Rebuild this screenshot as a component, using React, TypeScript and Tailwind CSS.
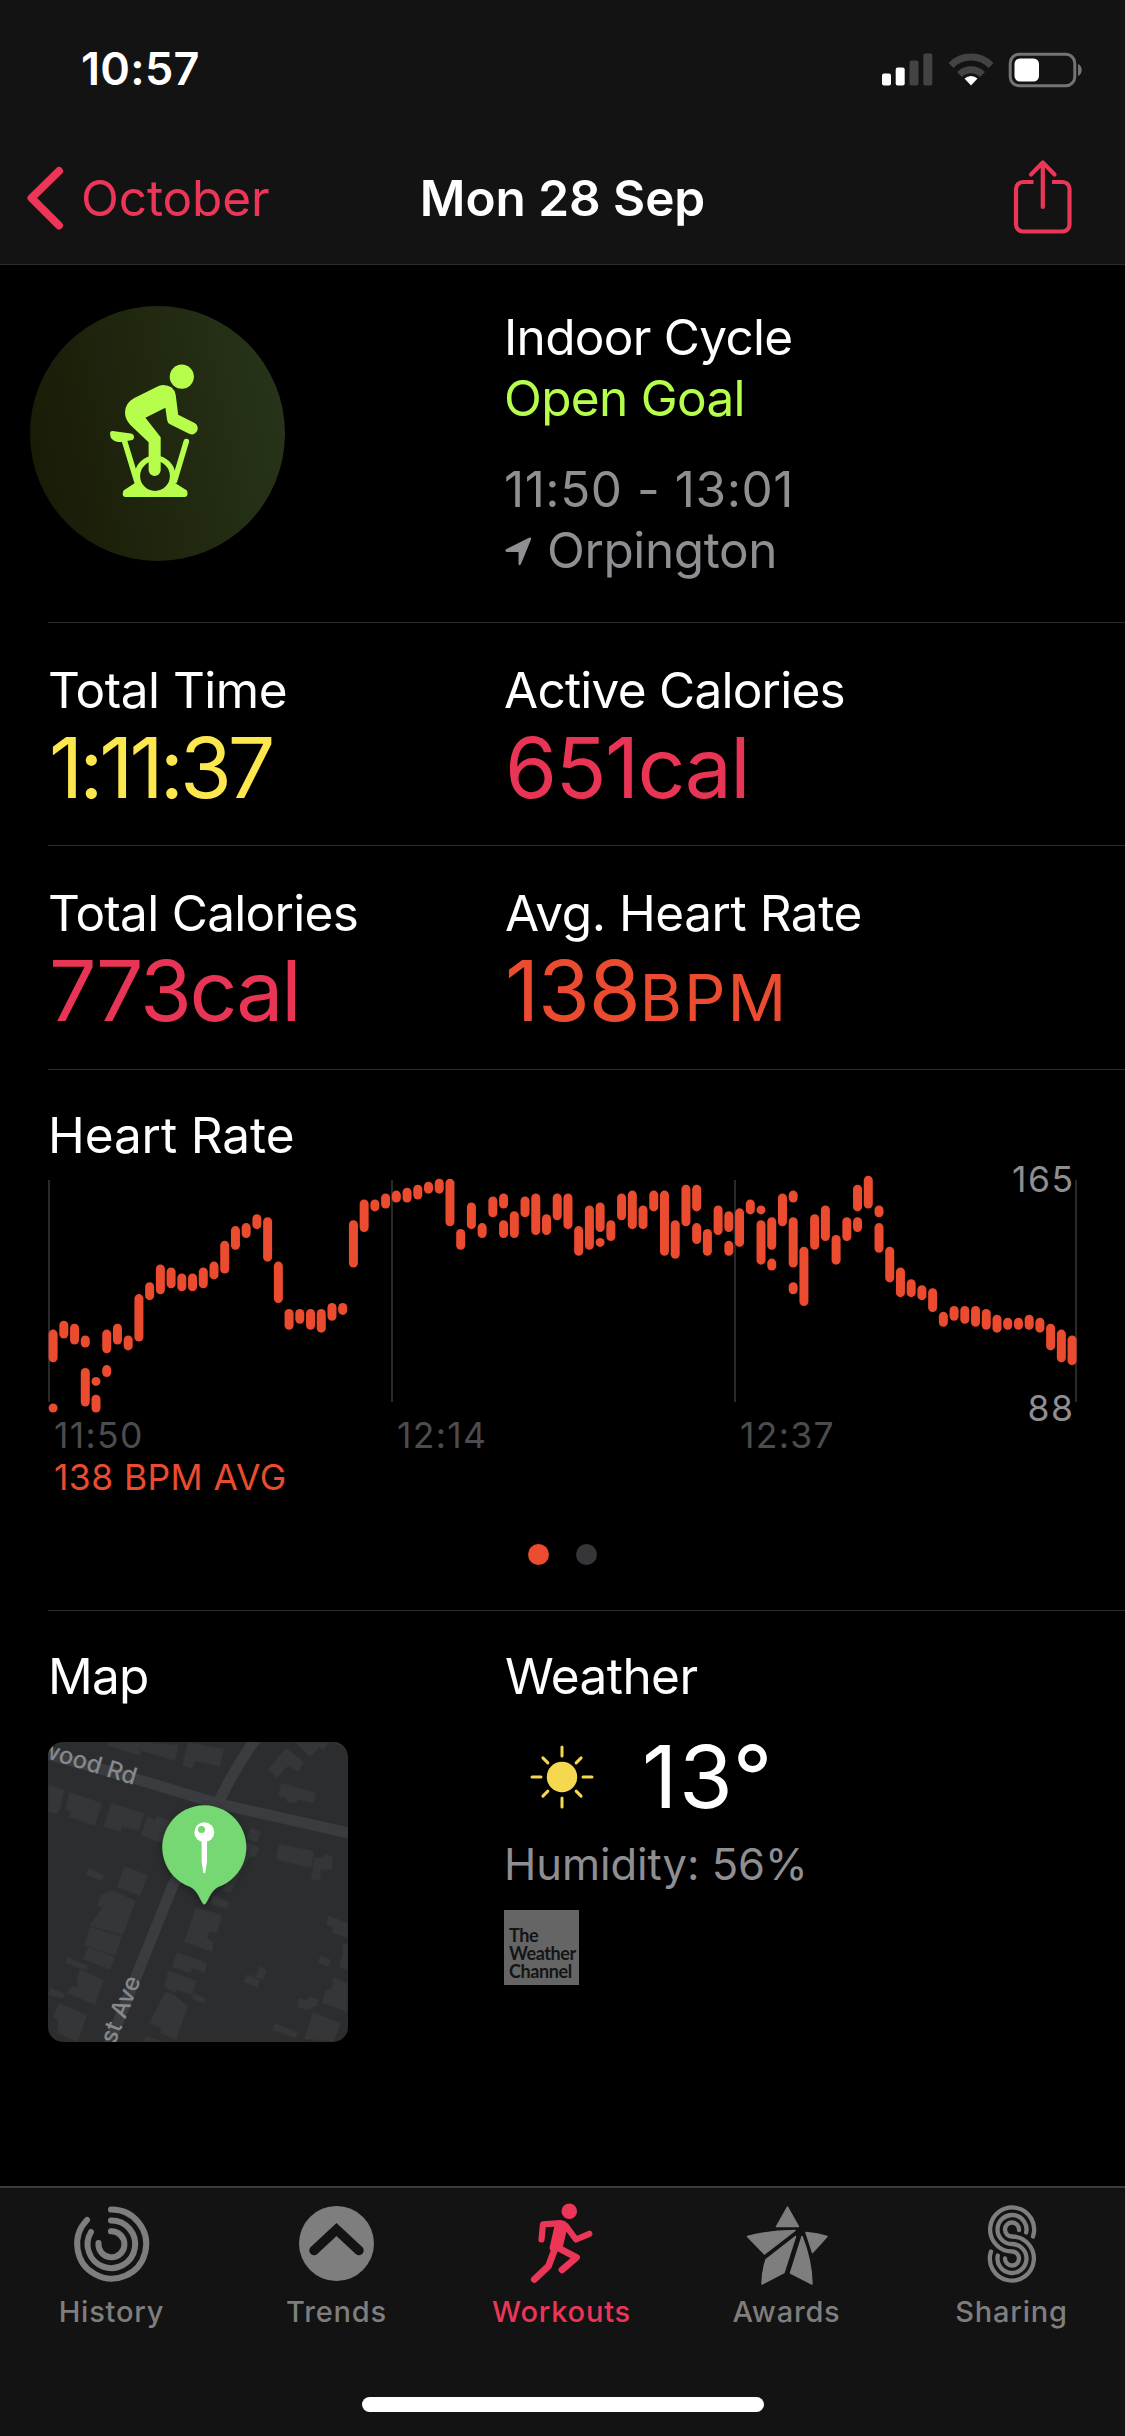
import type { ReactNode } from 'react';

type Range = [low: number, high: number];

// One column per time slot, each with one or more [low, high] BPM ranges
const heartRate: Range[][] = [
  [[105, 113], [88, 88]], [[113, 116]], [[111, 115]], [[110, 111], [90, 100]], [[97, 97], [88, 91]],
  [[108, 113], [100, 101]], [[111, 115]], [[109, 111]], [[112, 125]], [[126, 129]],
  [[128, 135]], [[130, 134]], [[129, 132]], [[129, 132]], [[130, 134]], [[133, 136]],
  [[135, 143]], [[143, 148]], [[147, 149]], [[150, 152]], [[139, 151]], [[125, 136]],
  [[116, 120]], [[118, 120]], [[116, 120]], [[115, 120]], [[119, 122]], [[121, 122]],
  [[137, 150]], [[149, 157]], [[156, 157]], [[157, 159]], [[159, 160]], [[159, 161]],
  [[160, 162]], [[162, 163]], [[162, 164]], [[151, 164]], [[143, 147]], [[150, 156]],
  [[147, 149]], [[154, 158]], [[157, 159], [147, 150]], [[147, 153]], [[154, 158]],
  [[148, 159]], [[148, 152]], [[153, 159]], [[150, 159]], [[141, 148]], [[143, 155]],
  [[149, 156], [144, 144]], [[146, 150]], [[153, 159]], [[150, 160]], [[150, 155]],
  [[156, 160]], [[141, 160]], [[140, 150]], [[151, 162]], [[156, 162], [145, 149]],
  [[141, 147]], [[148, 155]], [[149, 153], [141, 143]], [[144, 154]], [[155, 157]],
  [[155, 155], [138, 150]], [[143, 151], [136, 137]], [[151, 159]],
  [[159, 160], [137, 151], [128, 129]], [[124, 141]], [[143, 152]], [[146, 155]],
  [[138, 145]], [[146, 151]], [[156, 162], [149, 151]], [[157, 165]], [[154, 155], [142, 149]],
  [[132, 141]], [[127, 134]], [[127, 130]], [[126, 128]], [[122, 127]], [[117, 119]],
  [[119, 121]], [[118, 121]], [[117, 121]], [[116, 120]], [[115, 118]], [[116, 117]],
  [[116, 117]], [[116, 118]], [[115, 117]], [[109, 115]], [[105, 113]], [[104, 111]],
];

const buildings = [
  '58,0 97,0 92,14 60,4',
  '97,0 131,3 127,19 90,8',
  '140,0 176,7 172,25 148,19 144,27 134,24',
  '238,6 256,20 250,30 240,24 229,36 220,27',
  '247,0 282,0 275,8 272,5 262,15',
  '286,0 300,0 300,9',
  '233,41 268,51 266,61 250,58 249,61 239,60 238,56 230,54',
  '0,42 17,48 12,67 9,72 0,70',
  '21,50 54,61 47,84 21,75 23,70 18,67',
  '63,61 96,71 91,89 74,85 73,90 56,85',
  '99,74 107,78 109,74 122,78 122,98 109,100 93,93',
  '203,85 213,90 209,101 199,97',
  '199,100 212,106 207,115 202,115 182,151 174,148',
  '231,102 266,109 264,126 228,118',
  '267,115 275,116 277,112 285,115 284,128 273,128 272,139 263,137 265,125',
  '41,126 56,133 54,139 38,133',
  '76,124 100,133 92,154 69,145',
  '60,150 64,148 88,159 75,193 41,184 55,165 49,165 53,153',
  '42,185 74,194 67,214 36,203',
  '40,205 67,215 62,228 35,217',
  '20,215 40,224 39,229 17,221',
  '32,227 56,238 47,263 19,251 24,244 30,245 29,236',
  '2,245 17,252 15,257 0,253',
  '11,261 39,273 30,300 9,291 10,278 5,275',
  '148,165 174,173 169,191 162,190 159,196 166,201 164,210 136,200',
  '165,153 182,160 179,167 162,162',
  '129,210 159,221 157,231 144,226 142,231 124,225',
  '120,228 149,239 144,253 129,248 127,251 116,245',
  '145,251 158,256 156,261 144,257',
  '117,250 126,252 140,265 128,298 112,291 113,286 101,281',
  '97,294 117,300 96,300',
  '280,173 300,181 300,196 284,191 285,185 278,183',
  '273,213 283,218 280,225 269,221',
  '294,201 300,203 300,228 291,225 295,210',
  '212,224 219,228 215,238 207,235',
  '199,232 212,238 210,246 195,240',
  '285,235 300,241 299,270 274,261 277,248 284,246',
  '251,256 259,258 261,254 271,258 269,264 259,268 249,265',
  '265,270 293,281 286,300 256,297',
  '227,281 250,290 247,296 224,288',
];

const bpmY = (bpm: number) => 242 - (bpm - 88) * 2.957;

function StatusBar() {
  return (
    <div className="flex h-[132px] items-center justify-between pt-[5px] pl-[81px] pr-[42px]">
      <span className="text-[45px] leading-none font-semibold tracking-[0.3px]">10:57</span>
      <svg width="200" height="34" viewBox="0 0 200 34" className="mt-0.5 overflow-visible">
        <rect x="-1" y="20.5" width="9" height="12" rx="2" fill="#fff" />
        <rect x="12.7" y="14.5" width="9" height="18" rx="2" fill="#fff" />
        <rect x="26.5" y="7.5" width="9" height="25" rx="2" fill="#434343" />
        <rect x="40.3" y="0.5" width="9" height="32" rx="2" fill="#434343" />
        <g fill="none" stroke="#434343" strokeWidth="7">
          <path d="M68 12.5a28 28 0 0 1 40 0" />
          <path d="M76.5 21.5a16.5 16.5 0 0 1 23 0" />
        </g>
        <path d="M81.5 25.5a9.5 9.5 0 0 1 13 0L88 32.5z" fill="#fff" />
        <rect x="127.2" y="1.2" width="64.6" height="31.6" rx="9" fill="none" stroke="#747474" strokeWidth="3" />
        <rect x="131.5" y="5.5" width="24.5" height="23" rx="5.5" fill="#fff" />
        <path d="M195 11c5 2 5 10 0 12z" fill="#747474" />
      </svg>
    </div>
  );
}

function NavBar() {
  return (
    <div className="grid h-[132px] grid-cols-[1fr_auto_1fr] items-center text-[49.5px] leading-none">
      <div className="flex items-center gap-[17px] pl-[26px] text-[#ec3658]">
        <svg width="38" height="64" viewBox="0 0 38 64" fill="none" stroke="currentColor" strokeWidth="8" strokeLinecap="round" strokeLinejoin="round">
          <path d="M33 5 5.5 32 33 59.5" />
        </svg>
        <span className="pt-0.5 tracking-[-0.1px]">October</span>
      </div>
      <h1 className="pt-px font-semibold tracking-[-0.05px]">Mon 28 Sep</h1>
      <svg width="60" height="76" viewBox="0 0 60 76" className="mr-[52px] -mt-1 justify-self-end" fill="none" stroke="#ec3658" strokeWidth="4.2" strokeLinecap="round" strokeLinejoin="round">
        <path d="M20.5 24H10a7 7 0 0 0-7 7v35.5a7 7 0 0 0 7 7h39.500a7 7 0 0 0 7-7V31a7 7 0 0 0-7-7H39" strokeLinecap="butt" />
        <path d="M29.8 49V5M18 16.5 29.8 4.5 41.5 16.5" />
      </svg>
    </div>
  );
}

function CyclingBadge() {
  return (
    <svg width="255" height="255" viewBox="0 0 255 255" className="-ml-[18px]">
      <defs>
        <linearGradient id="badge" x1="0" y1="0.6" x2="1" y2="0.4">
          <stop offset="0" stopColor="#191b06" />
          <stop offset="1" stopColor="#273419" />
        </linearGradient>
      </defs>
      <circle cx="127.5" cy="127.5" r="127.5" fill="url(#badge)" />
      <g fill="#b7fd4c">
        <circle cx="151.8" cy="70.7" r="12.1" />
        <path d="M127 80.7 103.9 92.3Q95 97.300 95 106.5 95 113 100.4 119L118.6 136.3V164a6.050 6.050 0 0 0 12.1 0V131.3L115.4 111.7 135.4 101.7 137.1 114Q137.6 117 140 118.3L158.6 127.6A6.1 6.1 0 0 0 164.6 116.9L148.2 108.7 145.7 89Q144 79 133 79 130 79 127 80.7Z" />
        <path d="M80 127Q80 125 82.5 125L101 127.5Q104 128.2 104 131 104 134 101 134.3L97 135 93 136H88Q80 135 80 127Z" />
        <path d="M105 177 93.5 184.5Q91 191 95.5 191H154.5Q159 191 157 184.5L145 177A27 27 0 0 1 105 177Z" />
      </g>
      <g fill="none" stroke="#b7fd4c" strokeWidth="5.6" strokeLinecap="round">
        <circle cx="125" cy="170" r="17.7" />
        <path d="M94.5 135 107 176M156.3 135.5 144.5 175" />
      </g>
    </svg>
  );
}

function WorkoutSummary() {
  return (
    <section className="ml-12 grid h-[358px] grid-cols-[456px_1fr] border-b border-[#2b2b2d] pt-[41px]">
      <CyclingBadge />
      <div className="pt-px text-[49.5px] leading-[61px]">
        <p className="tracking-[-0.7px]">Indoor Cycle</p>
        <p className="tracking-[-0.7px] text-[#b7fd4c]">Open Goal</p>
        <p className="mt-[30px] tracking-[0.55px] text-[#8e8e93]">11:50 - 13:01</p>
        <p className="flex items-center gap-[15px] tracking-[-0.4px] text-[#8e8e93]">
          <svg width="27" height="29" viewBox="0 0 27 29" className="ml-px mt-0.5" fill="currentColor">
            <path d="M24.5 0.5Q26.5 0 26 2.5L16 27Q15 29 13.5 27.5V15H1.5Q-0.5 14 1 12.2Z" />
          </svg>
          Orpington
        </p>
      </div>
    </section>
  );
}

interface MetricProps {
  label: string;
  labelClassName: string;
  value: ReactNode;
  className: string;
}

function Metric({ label, labelClassName, value, className }: MetricProps) {
  return (
    <div>
      <h3 className={`text-[49.5px] leading-[61px] ${labelClassName}`}>{label}</h3>
      <p className={`mt-0.5 pl-px text-[84px] leading-[90px] ${className}`}>{value}</p>
    </div>
  );
}

function HeartRateChart() {
  return (
    <section className="ml-12 h-[541px] border-b border-[#2b2b2d] pt-[35px]">
      <h3 className="text-[49.5px] leading-[61px] tracking-[-0.1px]">Heart Rate</h3>
      <svg width="1040" height="248" viewBox="0 0 1040 248" className="block overflow-visible">
        {[1, 344, 687, 1028].map((x) => (
          <rect key={x} x={x - 1} y="14" width="2" height="222" fill="#29292b" />
        ))}
        {heartRate.map((ranges, i) =>
          ranges.map(([low, high]) => (
            <rect
              key={`${i}-${low}`}
              x={0.6 + i * 10.726}
              y={bpmY(high) - 4.5}
              width="9"
              height={bpmY(low) - bpmY(high) + 9}
              rx="4.5"
              fill="#eb4b2f"
            />
          ))
        )}
        <g fill="#8e8e93" fontSize="35.5" textAnchor="end" letterSpacing="1.5">
          <text x="1026.5" y="26">165</text>
          <text x="1026.5" y="254.5">88</text>
        </g>
      </svg>
      <div className="grid grid-cols-[343px_343px_1fr] pt-px pl-1.5 text-[35.5px] leading-[42px] tracking-[1.3px] text-[#4c4c4e]">
        <span>11:50</span>
        <span>12:14</span>
        <span>12:37</span>
      </div>
      <p className="pl-1.5 text-[35.5px] leading-[42px] tracking-[0.4px] text-[#eb4b2f]">138 BPM AVG</p>
      <div className="mt-[45px] mr-12 flex justify-center gap-[27px]">
        <span className="size-[21px] rounded-full bg-[#eb4b2f]" />
        <span className="size-[21px] rounded-full bg-[#363638]" />
      </div>
    </section>
  );
}

function MapTile() {
  return (
    <svg width="300" height="300" viewBox="0 0 300 300" className="mt-[35px] rounded-[15px]">
      <defs>
        <filter id="pinShadow" x="-30%" y="-30%" width="160%" height="160%">
          <feDropShadow dx="0" dy="3" stdDeviation="5" floodColor="#000" floodOpacity="0.35" />
        </filter>
      </defs>
      <rect width="300" height="300" fill="#2c2d2f" />
      <g fill="#353638" stroke="#303133" strokeWidth="1">
        {buildings.map((points) => (
          <polygon key={points} points={points} />
        ))}
      </g>
      <g fill="none" stroke="#3b3c40" strokeWidth="11">
        <path d="M-5 11 85 36 168 61 305 92" />
        <path d="M209-5Q188 24 170 61" />
        <path d="M170 61 125 143 88 235 60 305" />
      </g>
      <g fill="#85888c" fontSize="24" fontWeight="500">
        <text transform="translate(86 43) rotate(17)" textAnchor="end">wood Rd</text>
        <text transform="translate(93 238) rotate(-68)" textAnchor="end">st Ave</text>
      </g>
      <path
        d="M156.3 162.5Q154.5 162 151.5 155.5 148 148 142.5 145A42 42 0 1 1 170.1 145Q164.6 148 161 155.5 158 162 156.3 162.5Z"
        fill="#75d872"
        filter="url(#pinShadow)"
      />
      <path d="M153.6 98H159V120L157.3 130.5Q156.3 132 155.3 130.5L153.6 120Z" fill="#fff" />
      <circle cx="156.3" cy="90.3" r="10" fill="#fff" />
      <circle cx="153.5" cy="87.5" r="3.6" fill="#75d872" />
    </svg>
  );
}

function Weather() {
  return (
    <div>
      <h3 className="pl-px text-[49.5px] leading-[61px] tracking-[-0.55px]">Weather</h3>
      <div className="flex h-[130px] items-center gap-12 pt-[9px] pl-[26px]">
        <svg width="64" height="64" viewBox="-32 -32 64 64">
          <circle r="15.2" fill="#f6d750" />
          {[0, 45, 90, 135, 180, 225, 270, 315].map((angle) => (
            <path key={angle} d={angle % 90 ? 'M20 0H27' : 'M21 0H30'} transform={`rotate(${angle})`} stroke="#f6d750" strokeWidth="3" strokeLinecap="round" />
          ))}
        </svg>
        <span className="text-[87px] leading-none tracking-[1.5px]">13°</span>
      </div>
      <p className="text-[43.5px] leading-[54px] tracking-[-0.05px] text-[#8e8e93]">Humidity: 56%</p>
      <div className="mt-[19px] flex size-[75px] flex-col justify-end bg-[#656565] pb-[5px] pl-[5px] font-[Lato,sans-serif] text-[18px] leading-[18px] font-bold tracking-[-0.4px] text-[#141414]">
        <span>The</span>
        <span>Weather</span>
        <span>Channel</span>
      </div>
    </div>
  );
}

function HistoryIcon() {
  return (
    <svg width="84" height="84" viewBox="0 0 84 84" fill="none" stroke="currentColor" strokeWidth="6" strokeLinecap="round">
      <path d="M41 7.6A34.5 34.5 0 1 1 17 18" />
      <path d="M41 18.5A23.8 23.8 0 1 1 21 30" />
      <path d="M41 29.3A13 13 0 1 1 28.5 41" />
    </svg>
  );
}

function TrendsIcon() {
  return (
    <svg width="84" height="84" viewBox="0 0 84 84">
      <circle cx="41.5" cy="41.5" r="37.5" fill="currentColor" />
      <path d="M19 48.5 41.5 27.5 64 48.5" fill="none" stroke="#131313" strokeWidth="9.5" strokeLinecap="round" />
    </svg>
  );
}

function WorkoutsIcon() {
  return (
    <svg width="84" height="84" viewBox="0 0 84 84" fill="none" stroke="currentColor" strokeWidth="6.2" strokeLinecap="round" strokeLinejoin="round">
      <circle cx="49.3" cy="9.3" r="7.8" fill="currentColor" stroke="none" />
      <path d="M21.5 37.5 23 22.3 40 21.2" />
      <path d="M46 24 56 37.5 69.300 31.8" />
      <path d="M38.5 46 56.5 55.5 42 67.8" strokeWidth="6.8" />
      <path d="M36 44 28.5 64 14.3 77.5" strokeWidth="6.8" />
      <path d="M37 24 42 21Q46 21 44.5 27L40.5 44H35L32 46Z" fill="currentColor" strokeWidth="5" />
    </svg>
  );
}

function AwardsIcon() {
  return (
    <svg width="84" height="84" viewBox="0 0 84 84" fill="currentColor" stroke="currentColor" strokeWidth="1.5" strokeLinejoin="round">
      <path d="M42.500 5 31.500 24.5H53.500Z" />
      <path d="M2.5 34.5Q24 28.5 50 28.5L19.5 52Z" />
      <path d="M61 30.5Q73 31.5 82 34.5L67.5 50.5Z" />
      <path d="M50.5 34.5 21 57.5Q17 70 17 82L39 70.5Z" />
      <path d="M57 34.5 45.5 71 67 82Q66.5 58 57 34.5Z" />
    </svg>
  );
}

function SharingIcon() {
  return (
    <svg width="84" height="84" viewBox="0 0 84 84" fill="none" stroke="currentColor" strokeWidth="4.3" strokeLinecap="round">
      <path d="M63 34.5A22 22 0 1 0 42 49.5 7 7 0 1 1 35 56.5" />
      <path d="M56.2 30.5A14.5 14.5 0 1 0 42 42 14.5 14.5 0 1 1 27.8 53.5" />
      <path d="M49 28A7 7 0 1 0 42 34.5 22 22 0 1 1 21 49.5" />
    </svg>
  );
}

const tabs = [
  { name: 'History', icon: <HistoryIcon /> },
  { name: 'Trends', icon: <TrendsIcon /> },
  { name: 'Workouts', icon: <WorkoutsIcon />, active: true },
  { name: 'Awards', icon: <AwardsIcon /> },
  { name: 'Sharing', icon: <SharingIcon /> },
];

export default function App() {
  return (
    <div className="flex h-[2436px] w-[1125px] flex-col overflow-hidden bg-black font-[Inter,sans-serif] text-white">
      <header className="h-[265px] border-b border-[#2b2b2b] bg-[#131313]">
        <StatusBar />
        <NavBar />
      </header>

      <main className="flex-1">
        <WorkoutSummary />

        {/* Totals */}
        <section className="ml-12 grid h-[223px] grid-cols-[456px_1fr] border-b border-[#2b2b2d] pt-[37px]">
          <Metric label="Total Time" labelClassName="tracking-[-0.5px]" value="1:11:37" className="text-[#fde74f] tracking-[-4px]" />
          <Metric label="Active Calories" labelClassName="tracking-[-0.75px]" value="651cal" className="text-[#e93555] tracking-[-1.6px]" />
        </section>
        <section className="ml-12 grid h-[224px] grid-cols-[456px_1fr] border-b border-[#2b2b2d] pt-[37px]">
          <Metric label="Total Calories" labelClassName="tracking-[-0.7px]" value="773cal" className="text-[#e93555] tracking-[-2.2px]" />
          <Metric
            label="Avg. Heart Rate"
            labelClassName="pl-px tracking-[-0.45px]"
            value={<>138<span className="text-[65px] tracking-[2px]">BPM</span></>}
            className="text-[#eb4b2f] tracking-[-1.2px]"
          />
        </section>

        <HeartRateChart />

        <section className="ml-12 grid grid-cols-[456px_1fr] pt-[35px]">
          <div>
            <h3 className="text-[49.5px] leading-[61px] tracking-[-0.8px]">Map</h3>
            <MapTile />
          </div>
          <Weather />
        </section>
      </main>

      <nav className="h-[250px] border-t-2 border-[#3c3c3c] bg-[#131313]">
        <div className="-ml-px grid grid-cols-5 pt-3.5 pr-px">
          {tabs.map((tab) => (
            <div key={tab.name} className={`flex flex-col items-center gap-2 ${tab.active ? 'text-[#ec3658]' : 'text-[#7e7e7e]'}`}>
              {tab.icon}
              <span className="text-[29px] leading-9 font-medium tracking-[0.8px]">{tab.name}</span>
            </div>
          ))}
        </div>
        <div className="mx-auto mt-[67px] h-[15px] w-[402px] rounded-full bg-white" />
      </nav>
    </div>
  );
}
